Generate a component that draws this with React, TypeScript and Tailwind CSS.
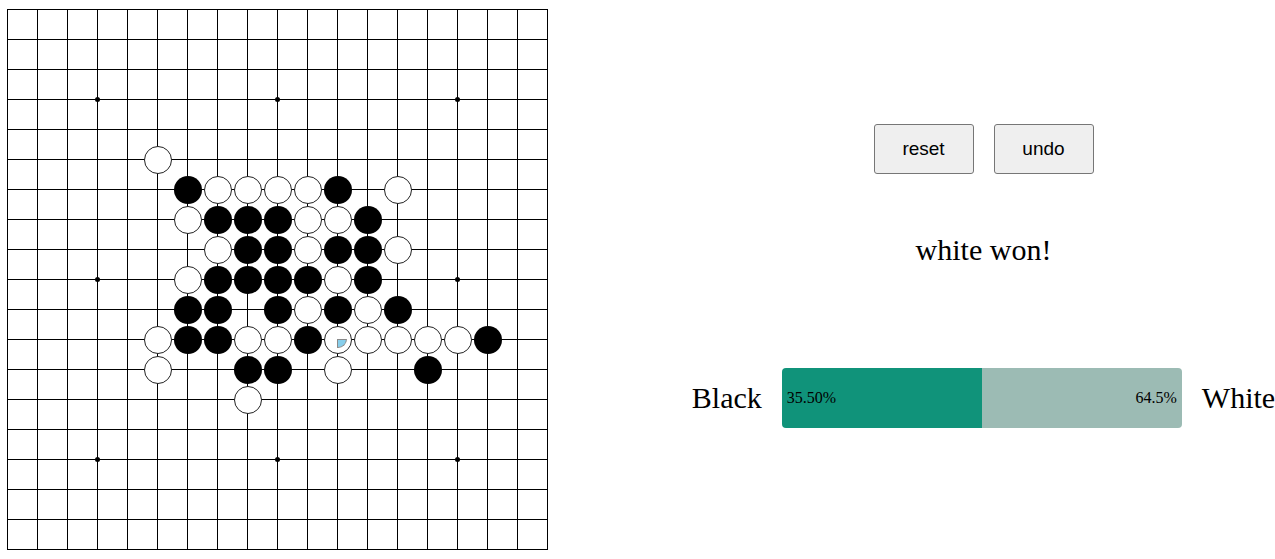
const SIZE = 18;
const CELL = 30;

// [row, col, color] — b = black, w = white
const STONES: [number, number, "b" | "w"][] = [
  [5, 5, "w"],
  [6, 6, "b"], [6, 7, "w"], [6, 8, "w"], [6, 9, "w"], [6, 10, "w"], [6, 11, "b"], [6, 13, "w"],
  [7, 6, "w"], [7, 7, "b"], [7, 8, "b"], [7, 9, "b"], [7, 10, "w"], [7, 11, "w"], [7, 12, "b"],
  [8, 7, "w"], [8, 8, "b"], [8, 9, "b"], [8, 10, "w"], [8, 11, "b"], [8, 12, "b"], [8, 13, "w"],
  [9, 6, "w"], [9, 7, "b"], [9, 8, "b"], [9, 9, "b"], [9, 10, "b"], [9, 11, "w"], [9, 12, "b"],
  [10, 6, "b"], [10, 7, "b"], [10, 9, "b"], [10, 10, "w"], [10, 11, "b"], [10, 12, "w"], [10, 13, "b"],
  [11, 5, "w"], [11, 6, "b"], [11, 7, "b"], [11, 8, "w"], [11, 9, "w"], [11, 10, "b"], [11, 11, "w"],
  [11, 12, "w"], [11, 13, "w"], [11, 14, "w"], [11, 15, "w"], [11, 16, "b"],
  [12, 5, "w"], [12, 8, "b"], [12, 9, "b"], [12, 11, "w"], [12, 14, "b"],
  [13, 8, "w"],
];

const STARS = [3, 9, 15];
const LAST_MOVE = [11, 11];

function Board() {
  return (
    <div className="relative ml-[7px] mt-[9px] w-[541px] h-[541px] border-l border-t border-black">
      <div className="grid grid-cols-[repeat(18,30px)]">
        {Array.from({ length: SIZE * SIZE }).map((_, i) => (
          <div key={i} className="w-[30px] h-[30px] border-r border-b border-black" />
        ))}
      </div>

      {/* offsets are relative to the padding box, 1px inside the left/top line */}
      {STARS.flatMap((r) =>
        STARS.map((c) => (
          <div
            key={`s${r}-${c}`}
            className="absolute w-[5px] h-[5px] rounded-full bg-black"
            style={{ left: c * CELL - 3, top: r * CELL - 3 }}
          />
        ))
      )}

      {STONES.map(([r, c, color]) => (
        <div
          key={`${r}-${c}`}
          className={
            color === "b"
              ? "absolute w-[28px] h-[28px] rounded-full bg-black"
              : "absolute w-[28px] h-[28px] rounded-full bg-white border border-[#222]"
          }
          style={{ left: c * CELL - 14.5, top: r * CELL - 14.5 }}
        />
      ))}

      <div
        className="absolute w-[10px] h-[9px] bg-[#87ceeb] border border-[#8a8a8a] rounded-br-[9px]"
        style={{ left: LAST_MOVE[1] * CELL - 1, top: LAST_MOVE[0] * CELL - 1 }}
      />
    </div>
  );
}

export default function App() {
  const serif = { fontFamily: '"Liberation Serif", "Times New Roman", serif' };

  return (
    <div className="flex justify-between w-[1275px] h-[559px] bg-white overflow-hidden">
      <Board />

      <div className="flex flex-col items-center w-[583px] pt-[124px]" style={serif}>
        <div className="flex gap-5" style={{ fontFamily: '"Liberation Sans", Arial, sans-serif' }}>
          <button className="w-[100px] h-[50px] bg-[#efefef] border border-[#767676] rounded-[3px] text-[19px] text-black">
            reset
          </button>
          <button className="w-[100px] h-[50px] bg-[#efefef] border border-[#767676] rounded-[3px] text-[19px] text-black">
            undo
          </button>
        </div>

        <div className="mt-[59px] text-[30px] leading-[34px] text-black">white won!</div>

        <div className="mt-[101px] flex items-center gap-5 text-black">
          <span className="text-[30px] leading-[34px]">Black</span>
          <div className="flex w-[400px] h-[60px] rounded-[4px] overflow-hidden text-[16px]">
            <div className="w-[200px] bg-[#10937a] flex items-center pl-[5px]">35.50%</div>
            <div className="flex-1 bg-[#9cbbb4] flex items-center justify-end pr-[5px]">64.5%</div>
          </div>
          <span className="text-[30px] leading-[34px]">White</span>
        </div>
      </div>
    </div>
  );
}
